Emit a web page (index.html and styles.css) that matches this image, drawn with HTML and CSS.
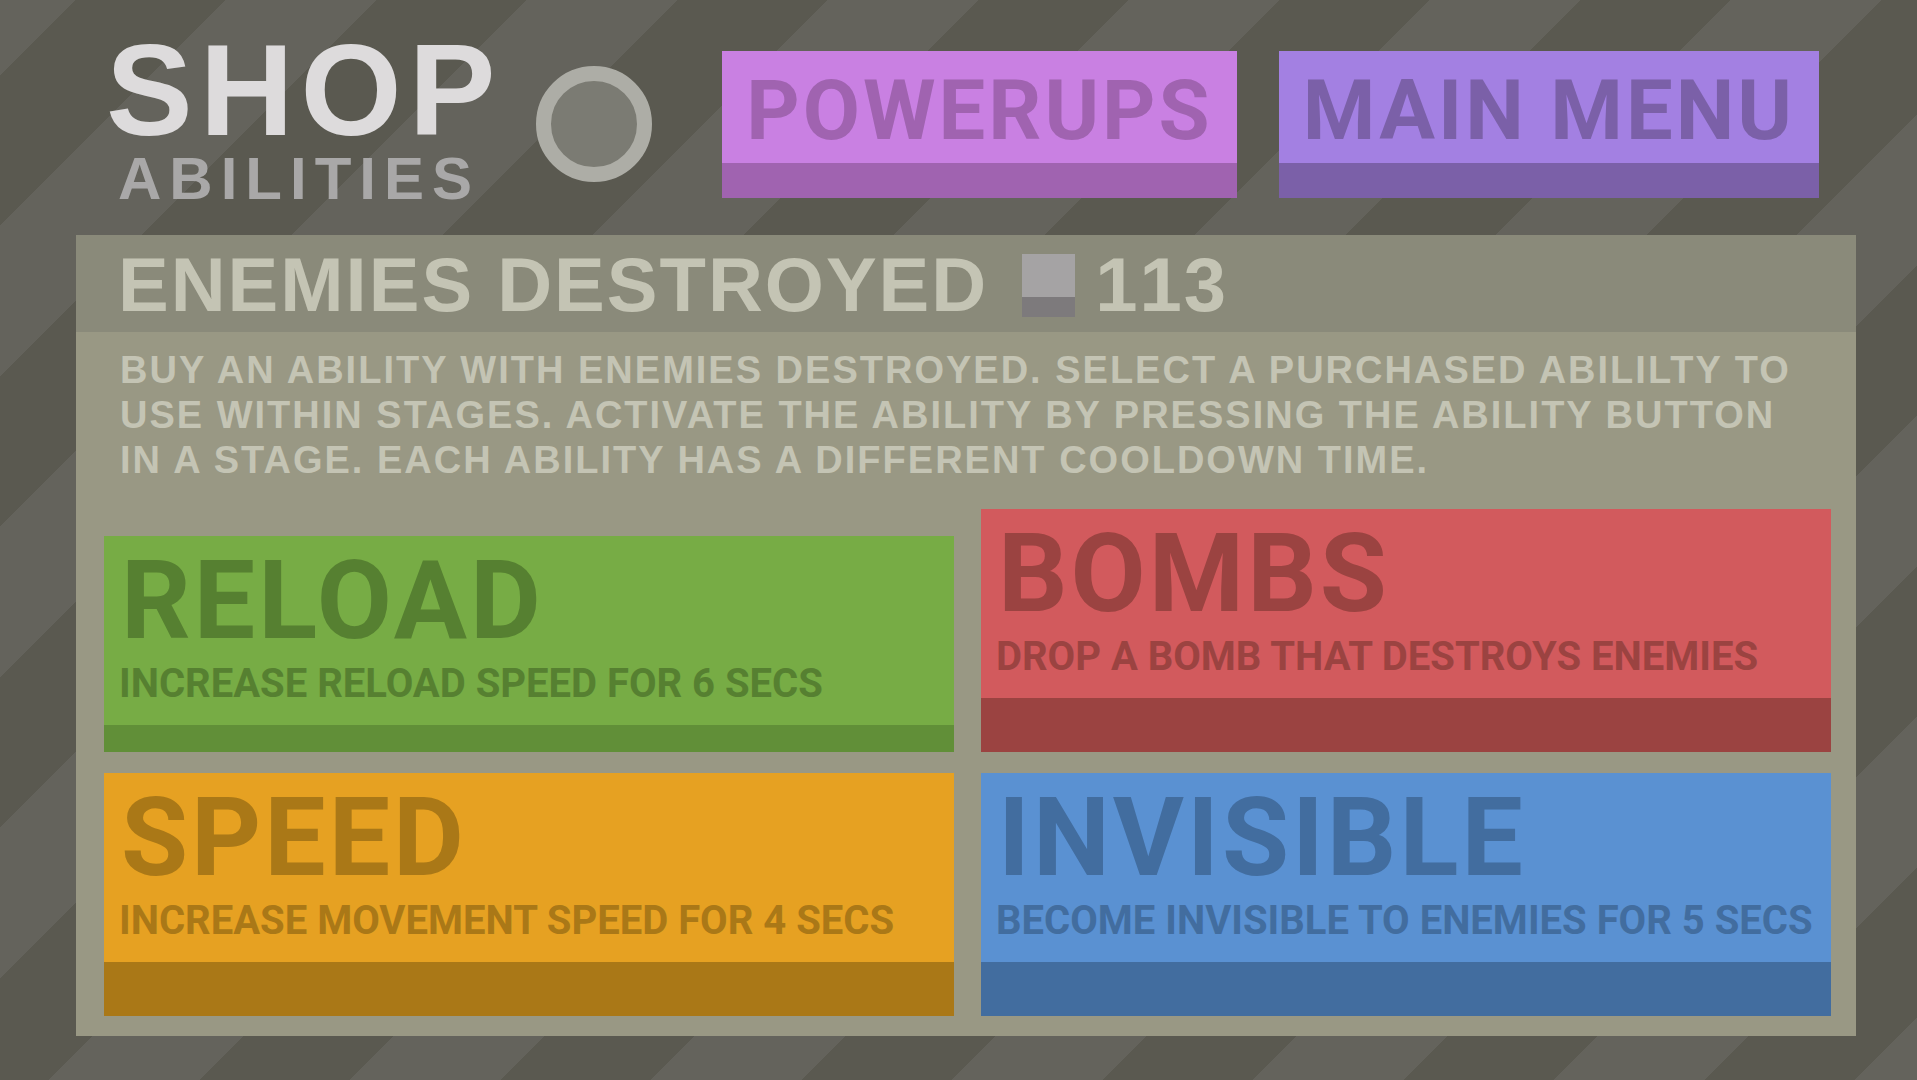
FILE: index.html
```
<!DOCTYPE html>
<html lang="en">
<head>
    <meta charset="utf-8">
    <title>Shop - Abilities</title>
    <link rel="stylesheet" href="styles.css">
</head>
<body>
<header class="top">
    <div class="brand">
        <h1>SHOP</h1>
        <h2>ABILITIES</h2>
    </div>
    <div class="joystick"></div>
    <nav class="menu">
        <button type="button" class="nav-button powerups">POWERUPS</button>
        <button type="button" class="nav-button main-menu">MAIN MENU</button>
    </nav>
</header>

<main class="panel">
    <div class="score">
        <span>ENEMIES DESTROYED</span>
        <span class="enemy"></span>
        <span class="count">113</span>
    </div>
    <p class="info">BUY AN ABILITY WITH ENEMIES DESTROYED. SELECT A PURCHASED ABILILTY TO USE WITHIN STAGES. ACTIVATE THE ABILITY BY PRESSING THE ABILITY BUTTON IN A STAGE. EACH ABILITY HAS A DIFFERENT COOLDOWN TIME.</p>
    <div class="abilities">
        <button type="button" class="ability reload selected">
            <span class="name">RELOAD</span>
            <span class="effect">INCREASE RELOAD SPEED FOR 6 SECS</span>
        </button>
        <button type="button" class="ability bombs">
            <span class="name">BOMBS</span>
            <span class="effect">DROP A BOMB THAT DESTROYS ENEMIES</span>
        </button>
        <button type="button" class="ability speed">
            <span class="name">SPEED</span>
            <span class="effect">INCREASE MOVEMENT SPEED FOR 4 SECS</span>
        </button>
        <button type="button" class="ability invisible">
            <span class="name">INVISIBLE</span>
            <span class="effect">BECOME INVISIBLE TO ENEMIES FOR 5 SECS</span>
        </button>
    </div>
</main>
</body>
</html>
```
FILE: styles.css
```
* {
    box-sizing: border-box;
}
body {
    margin: 0;
    min-height: 100vh;
    padding-bottom: 44px;
    font-family: "Liberation Sans", Arial, sans-serif;
    font-weight: bold;
    background-color: #5a5950;
    background-image: linear-gradient(135deg, #64635c 12.5%, #5a5950 12.5%, #5a5950 37.5%, #64635c 37.5%, #64635c 62.5%, #5a5950 62.5%, #5a5950 87.5%, #64635c 87.5%);
    background-size: 301px 301px;
}
h1, h2, p {
    margin: 0;
}
button {
    font-family: Roboto, "Liberation Sans", sans-serif;
    font-weight: bold;
    white-space: nowrap;
    border: none;
    cursor: pointer;
}

/* header */
.top {
    display: flex;
    align-items: center;
    padding: 35px 98px 22px 106px;
}
.brand h1 {
    font-size: 130px;
    line-height: 110px;
    letter-spacing: 7px;
    color: #dddbdc;
}
.brand h2 {
    padding-left: 12px;
    font-size: 60px;
    line-height: 68px;
    letter-spacing: 8px;
    color: #a9a8a8;
}
.joystick {
    flex-shrink: 0;
    width: 116px;
    height: 116px;
    margin-left: 34px;
    border: 15px solid #adada6;
    border-radius: 50%;
    background-color: #7b7b73;
}
.menu {
    display: flex;
    gap: 42px;
    margin-left: auto;
}
.nav-button {
    height: 147px;
    padding: 8px 24px 0;
    font-size: 83px;
    line-height: 104px;
    letter-spacing: 3px;
    border-bottom: 35px solid;
}
.powerups {
    color: #a063b0;
    background-color: #c980e2;
    border-color: #a063b0;
}
.main-menu {
    color: #7b60a8;
    background-color: #a380e2;
    border-color: #7b60a8;
}

/* panel */
.panel {
    margin: 0 61px 0 76px;
    padding-bottom: 20px;
    background-color: #999884;
}
.score {
    display: flex;
    align-items: center;
    padding: 3px 42px 0;
    font-size: 76px;
    line-height: 94px;
    letter-spacing: 2px;
    color: #c4c4b4;
    background-color: #8a8a7a;
}
.enemy {
    width: 53px;
    height: 63px;
    margin: 0 20px 0 34px;
    background-color: #a5a3a4;
    border-bottom: 20px solid #7d7a7c;
}
.count {
    font-kerning: none;
}
.info {
    padding: 16px 42px 0 44px;
    font-size: 38px;
    line-height: 45px;
    letter-spacing: 2px;
    color: #c4c4b4;
}
.abilities {
    display: grid;
    grid-template-columns: minmax(0, 1fr) minmax(0, 1fr);
    gap: 21px 27px;
    align-items: end;
    margin-top: 26px;
    padding: 0 25px 0 28px;
}
.ability {
    display: flex;
    flex-direction: column;
    align-items: flex-start;
    height: 243px;
    padding: 11px 15px 0;
    text-align: left;
    border-bottom: 54px solid;
}
.ability.selected {
    height: 216px;
    border-bottom-width: 27px;
}
.name {
    padding-left: 2px;
    font-size: 109px;
    line-height: 108px;
    letter-spacing: 3px;
}
.effect {
    font-size: 40px;
    line-height: 58px;
}
.reload {
    color: #568031;
    background-color: #77ac45;
    border-color: #618f38;
}
.bombs {
    color: #9b4341;
    background-color: #d25a5d;
    border-color: #9b4341;
}
.speed {
    color: #aa7817;
    background-color: #e6a122;
    border-color: #aa7817;
}
.invisible {
    color: #426d9f;
    background-color: #5a91d2;
    border-color: #426d9f;
}
```
